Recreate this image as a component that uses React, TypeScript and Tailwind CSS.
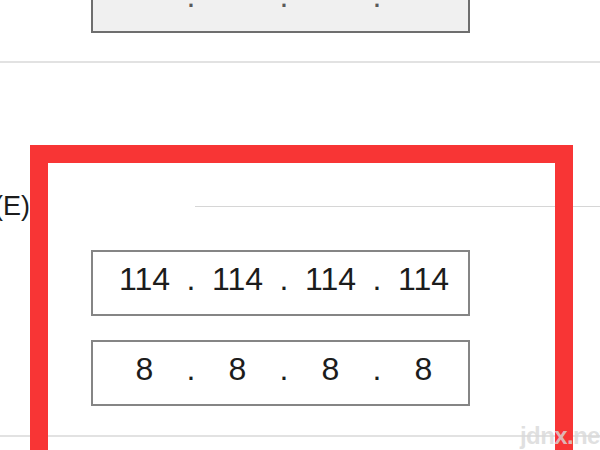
const segCls = 'w-[87px] flex justify-center'
const dotCls = 'w-[6px] flex justify-center'

function IpField({ parts, disabled }: { parts: string[]; disabled?: boolean }) {
  return (
    <div
      className={`ml-[91px] w-[379px] h-[66px] border-2 flex items-center pl-[8px] pr-[4px] pb-[8px] ${
        disabled ? 'bg-[#f0f0f0] border-[#6e6e6e] text-[#5a5a5a]' : 'bg-white border-[#858585] text-[#1c1c1c]'
      }`}
    >
      {parts.map((p, i) => (
        <div key={i} className="flex">
          {i > 0 && <span className={dotCls}>.</span>}
          <span className={segCls}>{p}</span>
        </div>
      ))}
    </div>
  )
}

export default function App() {
  return (
    <div
      className="relative w-[600px] h-[450px] overflow-hidden bg-white text-[32px] leading-none"
      style={{ fontFamily: '"Liberation Sans", Arial, sans-serif' }}
    >
      <div className="-mt-[33px]">
        <IpField parts={['', '', '', '']} disabled />
      </div>

      <div className="mt-[28px] h-[2px] bg-[#e2e2e2]" />

      <div className="mt-[127px] h-[32px] flex items-center">
        <span className="-ml-[6px] w-[201px] text-[27px] text-[#1c1c1c]">(E)</span>
        <div className="flex-1 h-px bg-[#d6d6d6]" />
      </div>

      <div className="mt-[28px]">
        <IpField parts={['114', '114', '114', '114']} />
      </div>
      <div className="mt-[24px]">
        <IpField parts={['8', '8', '8', '8']} />
      </div>

      <div className="mt-[29px] h-[2px] bg-[#e2e2e2]" />

      {/* red annotation frame drawn over the dialog */}
      <div className="absolute left-[30px] top-[145px] w-[543px] h-[400px] border-[18px] border-[#f83535]" />

      <div className="absolute left-[520px] top-[424px] text-[24px] font-bold text-[#d8d8d8]/80 tracking-tight">
        jdnx.net
      </div>
    </div>
  )
}
